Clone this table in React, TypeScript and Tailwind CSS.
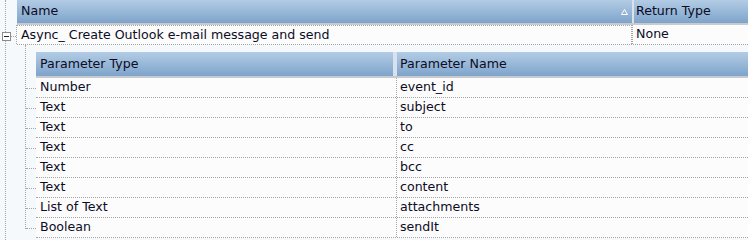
const params = [
  { type: 'Number', name: 'event_id' },
  { type: 'Text', name: 'subject' },
  { type: 'Text', name: 'to' },
  { type: 'Text', name: 'cc' },
  { type: 'Text', name: 'bcc' },
  { type: 'Text', name: 'content' },
  { type: 'List of Text', name: 'attachments' },
  { type: 'Boolean', name: 'sendIt' },
];

const headerBg = 'bg-gradient-to-b from-[#b3cce5] to-[#7ea4ca]';

function SortArrow() {
  return (
    <svg width="7" height="6" viewBox="0 0 7 6" className="mr-[4px]">
      <polygon points="3.5,0.5 6.5,5.5 0.5,5.5" fill="none" stroke="#ffffff" strokeWidth="1" />
    </svg>
  );
}

export default function App() {
  return (
    <div
      className="relative flex w-[748px] h-[240px] overflow-hidden bg-[#f6f9fc] text-[12.6px] text-[#0c0c26]"
      style={{ fontFamily: '"DejaVu Sans", Verdana, sans-serif' }}
    >
      {/* row-expander gutter */}
      <div className="w-[17px] shrink-0 h-full">
        <div className="ml-[5px] h-full border-l border-dotted border-[#a5a5a5]" />
      </div>

      {/* collapse box over the gutter line */}
      <div className="absolute left-[2px] top-[32px] flex items-center">
        <div className="w-[9px] h-[9px] border border-[#8c8c8c] bg-white flex items-center justify-center">
          <div className="w-[5px] h-px bg-[#222]" />
        </div>
        <div className="w-[5px] border-t border-dotted border-[#a5a5a5]" />
      </div>

      <div className="flex-1 flex flex-col min-w-0">
        {/* main header */}
        <div className="flex h-[25px] shrink-0 border-b-2 border-[#c7cbcf]">
          <div className={`flex items-center justify-between w-[615px] pl-[4px] ${headerBg}`}>
            <span>Name</span>
            <SortArrow />
          </div>
          <div className="w-[2px] bg-[#d7e2ed]" />
          <div className={`flex-1 flex items-center pl-[2px] ${headerBg}`}>Return Type</div>
        </div>

        {/* method row */}
        <div className="flex h-[20px] shrink-0 bg-[#fcfcfc] border-b border-dotted border-[#a5a5a5]">
          <div className="w-[616px] -ml-px flex items-center pl-[4px] border border-b-0 border-dotted border-[#a5a5a5]">
            Async_ Create Outlook e-mail message and send
          </div>
          <div className="flex-1 flex items-center pl-[3px] border-l border-dotted border-[#a5a5a5]">None</div>
        </div>

        {/* parameters detail */}
        <div className="flex flex-1 pt-[7px]">
          <div className="w-[19px] shrink-0 -mt-[7px] pl-[8px]">
            <div className="h-[184px] border-l border-dotted border-[#a5a5a5] flex flex-col pt-[43px] gap-[19px]">
              {params.map((p) => (
                <div key={p.name} className="w-[10px] border-t border-dotted border-[#a5a5a5]" />
              ))}
            </div>
          </div>

          <div className="flex-1 flex flex-col">
            <div className="flex h-[26px] shrink-0 border-b-2 border-[#c7cbcf]">
              <div className={`w-[357px] flex items-center pl-[4px] ${headerBg}`}>Parameter Type</div>
              <div className="w-[4px] bg-[#d7e2ed]" />
              <div className={`flex-1 flex items-center pl-[3px] ${headerBg}`}>Parameter Name</div>
            </div>
            {params.map((p) => (
              <div key={p.name} className="flex h-[20px] shrink-0 bg-[#fcfcfc] border-b border-dotted border-[#a5a5a5]">
                <div className="w-[360px] flex items-center pl-[4px]">{p.type}</div>
                <div className="flex-1 flex items-center pl-[3px] border-l border-dotted border-[#a5a5a5]">{p.name}</div>
              </div>
            ))}
          </div>
        </div>
      </div>
    </div>
  );
}
